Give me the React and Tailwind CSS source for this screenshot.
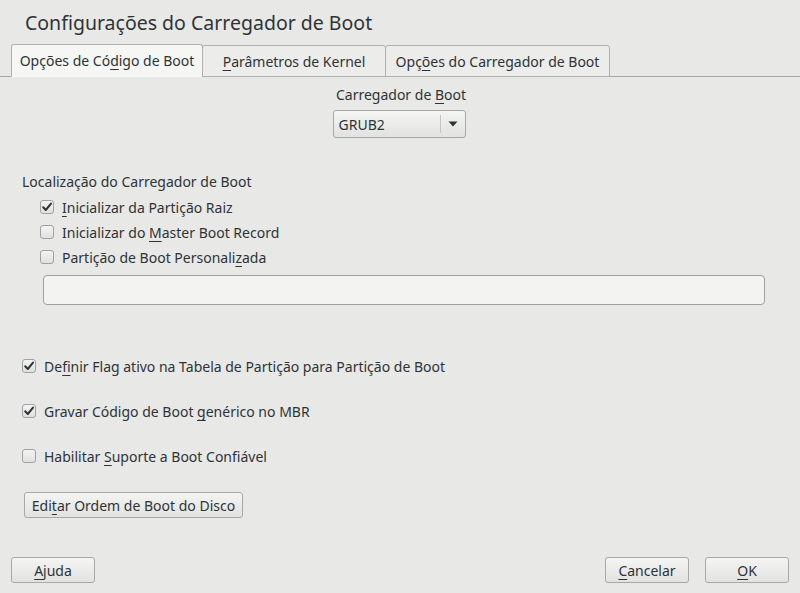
import React, { useState } from "react";

const Check = ({ checked }) => (
  <span className="w-[14px] h-[14px] rounded-[3px] border border-[#a1a1a1] bg-gradient-to-b from-[#f4f4f4] to-[#e0e0e0] flex items-center justify-center shrink-0">
    {checked && (
      <svg width="12" height="12" viewBox="0 0 12 12">
        <path d="M2.2 6.3 L4.8 9 L10 2.6" fill="none" stroke="#2e3436" strokeWidth="2" strokeLinecap="round" strokeLinejoin="round" />
      </svg>
    )}
  </span>
);

const U = ({ children }) => (
  <span className="underline underline-offset-[3px] decoration-1 [text-decoration-skip-ink:none]">{children}</span>
);

const CheckRow = ({ checked, children, className = "" }) => (
  <div className={"flex items-center gap-2 h-[20px] " + className}>
    <Check checked={checked} />
    <span>{children}</span>
  </div>
);

const Btn = ({ children, className = "" }) => (
  <button className={"h-[26px] rounded-[3px] border border-[#a8a8a8] bg-gradient-to-b from-[#f4f4f3] to-[#e2e2e1] text-[#2e3436] text-[14px] " + className}>
    {children}
  </button>
);

export default function App() {
  const [tab] = useState(0);
  const tabs = [
    <>Opções de Có<U>d</U>igo de Boot</>,
    <><U>P</U>arâmetros de Kernel</>,
    <>Opç<U>õ</U>es do Carregador de Boot</>,
  ];
  const widths = ["w-[192px]", "w-[184px]", "w-[225px]"];

  return (
    <div className="w-[800px] h-[593px] bg-[#e8e8e7] text-[#2e3436] text-[14px] flex flex-col font-['Noto_Sans','Open_Sans',sans-serif] overflow-hidden">
      <h1 className="pl-[25px] pt-[9px] h-[44px] text-[19.5px] leading-[28px] text-[#2e3436]">Configurações do Carregador de Boot</h1>

      <div className="flex items-end pl-[11px] h-[33px] border-b border-[#a8a8a8]">
        {tabs.map((t, i) => (
          <div
            key={i}
            className={
              widths[i] +
              " h-[32px] flex items-center justify-center border border-[#b0b0b0] rounded-t-[3px] -mb-px " +
              (i === 0 ? "" : "-ml-px ") +
              (i === tab ? "bg-[#f6f6f5] border-b-[#f6f6f5] h-[33px]" : "bg-[#ececeb]")
            }
          >
            {t}
          </div>
        ))}
      </div>

      <div className="flex flex-col items-center pt-[8px]">
        <div className="h-[20px] leading-[20px] pl-[2px]">Carregador de <U>B</U>oot</div>
        <div className="mt-[5px] w-[133px] h-[28px] -ml-[2px] rounded-[3px] border border-[#a8a8a8] bg-gradient-to-b from-[#f4f4f3] to-[#e2e2e1] flex items-center">
          <span className="flex-1 pl-[5px]">GRUB2</span>
          <span className="w-px h-[18px] bg-[#c4c4c4]" />
          <span className="w-[24px] flex justify-center">
            <svg width="10" height="6" viewBox="0 0 10 6"><path d="M0.5 0.5 H9.5 L5 5.5 Z" fill="#2e3436" /></svg>
          </span>
        </div>
      </div>

      <div className="pl-[22px] pt-[34px]">
        <div className="h-[20px] leading-[20px]">Localização do Carregador de Boot</div>
        <div className="pl-[18px] pt-[5px] flex flex-col gap-[5px]">
          <CheckRow checked><U>I</U>nicializar da Partição Raiz</CheckRow>
          <CheckRow>Inicializar do <U>M</U>aster Boot Record</CheckRow>
          <CheckRow>Partição de Boot Personali<U>z</U>ada</CheckRow>
        </div>
        <div className="ml-[21px] mt-[8px] w-[722px] h-[30px] rounded-[4px] border border-[#a0a0a0] bg-[#f3f3f2]" />
      </div>

      <div className="pl-[22px] pt-[51px] flex flex-col gap-[25px]">
        <CheckRow checked>De<U>f</U>inir Flag ativo na Tabela de Partição para Partição de Boot</CheckRow>
        <CheckRow checked>Gravar Código de Boot <U>g</U>enérico no MBR</CheckRow>
        <CheckRow>Habilitar <U>S</U>uporte a Boot Confiável</CheckRow>
      </div>

      <div className="pl-[24px] pt-[26px]">
        <Btn className="w-[219px]">Edi<U>t</U>ar Ordem de Boot do Disco</Btn>
      </div>

      <div className="flex-1" />
      <div className="flex items-center px-[11px] pb-[10px]">
        <Btn className="w-[84px]"><U>A</U>juda</Btn>
        <div className="flex-1" />
        <Btn className="w-[84px]"><U>C</U>ancelar</Btn>
        <Btn className="w-[84px] ml-[16px]"><U>O</U>K</Btn>
      </div>
    </div>
  );
}
